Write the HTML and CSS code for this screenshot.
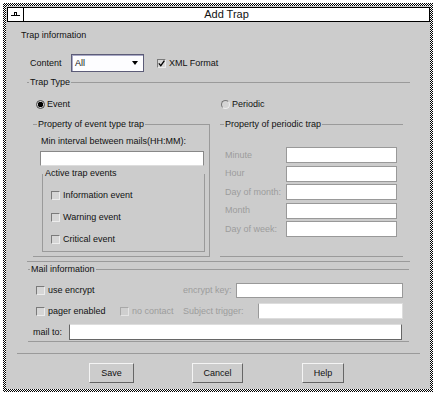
FILE: index.html
```html
<!DOCTYPE html>
<html>
<head>
    <meta charset="utf-8" />
    <title>Add Trap</title>
    <link rel="stylesheet" href="styles.css">
</head>
<body>
    <div class="frame">
        <div class="window">
            <div class="titlebar">
                <div class="menu-icon">
                    <svg width="9" height="5" viewBox="0 0 9 5"><path d="M3 0.5h3M3.5 0.5v3M5.5 0.5v3M0 3.5h9" stroke="#000" stroke-width="1" fill="none"/></svg>
                </div>
                <div class="title">Add Trap</div>
            </div>

            <div class="section-title">Trap information</div>

            <div class="content-row">
                <span class="content-label">Content</span>
                <div class="combo"><span>All</span><span class="arrow"></span></div>
                <span class="check checked">
                    <svg width="7" height="7" viewBox="0 0 7 7"><path d="M0.8 3.4l2 2.2l3.6-5" stroke="#000" stroke-width="1.3" fill="none"/></svg>
                </span>
                <span class="check-text">XML Format</span>
            </div>

            <fieldset class="group trap-type">
                <legend>Trap Type</legend>
                <div class="trap-grid">
                    <div class="radio-row"><span class="radio on"></span><span class="radio-text">Event</span></div>
                    <div class="radio-row periodic"><span class="radio"></span><span class="radio-text">Periodic</span></div>

                    <fieldset class="group event-box">
                        <legend>Property of event type trap</legend>
                        <div class="field-label">Min interval between mails(HH:MM):</div>
                        <div class="input interval"></div>
                        <fieldset class="group active-box">
                            <legend>Active trap events</legend>
                            <div class="event-list">
                                <div class="event-row"><span class="check"></span><span class="check-text">Information event</span></div>
                                <div class="event-row"><span class="check"></span><span class="check-text">Warning event</span></div>
                                <div class="event-row"><span class="check"></span><span class="check-text">Critical event</span></div>
                            </div>
                        </fieldset>
                    </fieldset>

                    <fieldset class="group periodic-box">
                        <legend>Property of periodic trap</legend>
                        <div class="periodic-list">
                            <div class="periodic-row"><span class="dim">Minute</span><div class="input"></div></div>
                            <div class="periodic-row"><span class="dim">Hour</span><div class="input"></div></div>
                            <div class="periodic-row"><span class="dim">Day of month:</span><div class="input"></div></div>
                            <div class="periodic-row"><span class="dim">Month</span><div class="input"></div></div>
                            <div class="periodic-row"><span class="dim">Day of week:</span><div class="input"></div></div>
                        </div>
                    </fieldset>
                </div>
            </fieldset>

            <fieldset class="group mail-box">
                <legend>Mail information</legend>
                <div class="mail-row">
                    <span class="opt encrypt"><span class="check"></span><span class="check-text">use encrypt</span></span>
                    <span class="dim key-label">encrypt key:</span>
                    <div class="input key-input"></div>
                </div>
                <div class="mail-row">
                    <span class="opt pager"><span class="check"></span><span class="check-text">pager enabled</span></span>
                    <span class="opt contact"><span class="check off"></span><span class="check-text dim">no contact</span></span>
                    <span class="dim subject-label">Subject trigger:</span>
                    <div class="input subject-input"></div>
                </div>
                <div class="mail-row mail-to">
                    <span class="mail-label">mail to:</span>
                    <div class="input mail-input"></div>
                </div>
            </fieldset>

            <div class="separator"></div>

            <div class="buttons">
                <button class="btn save">Save</button>
                <button class="btn cancel">Cancel</button>
                <button class="btn help">Help</button>
            </div>
        </div>
    </div>
</body>
</html>
```

FILE: styles.css
```css
body {
    margin: 0;
    background: white;
    font-family: "Liberation Sans", Arial, sans-serif;
    font-size: 9px;
    line-height: 11px;
    color: #111;
}

.frame {
    margin: 3px 0 0 3px;
    width: 430px;
    height: 389px;
    padding: 3px;
    box-sizing: border-box;
    background: repeating-conic-gradient(#000 0% 25%, #fff 0% 50%) 0 0 / 2px 2px;
}

.window {
    width: 424px;
    height: 383px;
    background: #cccccc;
    display: flex;
    flex-direction: column;
    align-items: flex-start;
}

.titlebar {
    margin: 1px 0 0 1px;
    width: 423px;
    height: 15px;
    box-sizing: border-box;
    border: 1px solid #000;
    background: white;
    display: flex;
}

.menu-icon {
    width: 15px;
    border-right: 1px solid #000;
    display: flex;
    align-items: center;
    justify-content: center;
}

.title {
    flex: 1;
    text-align: center;
    font-size: 11px;
    line-height: 13px;
}

.section-title {
    margin: 8px 0 0 15px;
}

/* content row */
.content-row {
    margin: 13px 0 0 24px;
    height: 18px;
    display: flex;
    align-items: center;
}

.content-label {
    width: 41px;
}

.combo {
    width: 73px;
    height: 18px;
    box-sizing: border-box;
    border: 1px solid #5c5c78;
    box-shadow: inset 1px 1px 0 #a9a9c6;
    background: #fdfdff;
    display: flex;
    align-items: center;
    justify-content: space-between;
    padding: 0 5px 0 3px;
    margin-right: 13px;
}

.arrow {
    width: 0;
    height: 0;
    border-left: 3px solid transparent;
    border-right: 3px solid transparent;
    border-top: 4px solid #000;
}

.check {
    width: 9px;
    height: 9px;
    box-sizing: border-box;
    border: 1px solid;
    border-color: #7a7a7a #ececec #ececec #7a7a7a;
    background: #d6d6d6;
    display: inline-flex;
    align-items: center;
    justify-content: center;
    flex: none;
}

.check.off {
    border-color: #a8a8a8 #e4e4e4 #e4e4e4 #a8a8a8;
    background: #cfcfcf;
}

.check-text {
    margin-left: 3px;
}

.dim {
    color: #9c9c9c;
}

/* titled groups */
.group {
    margin: 0;
    padding: 0;
    min-width: 0;
    border: 0;
    border-top: 1px solid #9a9a9a;
    border-bottom: 1px solid #9a9a9a;
}

.group > legend {
    padding: 0 1px;
    margin-left: 2px;
    line-height: 11px;
}

.trap-type {
    margin: 5px 0 0 21px;
    width: 383px;
}

.trap-grid {
    display: grid;
    grid-template-columns: 177px 183px;
    column-gap: 10px;
    padding: 0 0 4px 6px;
}

.radio-row {
    margin-top: 11px;
    height: 11px;
    display: flex;
    align-items: center;
    padding-left: 3px;
}

.radio-row.periodic {
    padding-left: 1px;
}

.radio {
    width: 9px;
    height: 9px;
    box-sizing: border-box;
    border-radius: 50%;
    border: 1px solid;
    border-color: #777 #eee #eee #777;
    background: #d4d4d4;
    flex: none;
}

.radio.on {
    border-color: #444;
    background: radial-gradient(circle, #000 0 2.5px, #cfcfcf 3px);
}

.radio-text {
    margin-left: 2px;
}

.event-box {
    margin-top: 9px;
    border-right: 1px solid #9a9a9a;
    height: 138px;
    box-sizing: border-box;
    padding: 0 0 0 7px;
}

.event-box > legend {
    margin-left: -3px;
}

.periodic-box > legend {
    margin-left: 4px;
}

.field-label {
    margin: 6px 0 0 1px;
}

.input {
    background: white;
    box-sizing: border-box;
    border: 1px solid #999;
}

.interval {
    margin-top: 4px;
    width: 164px;
    height: 15px;
    border-color: #888 #888 #ddd #888;
}

.active-box {
    margin: 2px 0 0 2px;
    width: 163px;
    height: 84px;
    box-sizing: border-box;
    border-top: 0;
    border-left: 1px solid #9a9a9a;
    border-right: 1px solid #9a9a9a;
}

.active-box > legend {
    padding: 0;
    margin-left: 2px;
}

.event-list {
    display: flex;
    flex-direction: column;
    gap: 11px;
    padding: 11px 0 0 8px;
}

.event-row {
    height: 11px;
    display: flex;
    align-items: center;
}

.periodic-box {
    margin-top: 9px;
    width: 183px;
    height: 138px;
    box-sizing: border-box;
}

.periodic-list {
    display: flex;
    flex-direction: column;
    gap: 2.5px;
    padding: 17px 0 0 5px;
}

.periodic-row {
    display: flex;
    align-items: center;
    height: 16px;
}

.periodic-row .dim {
    width: 61px;
}

.periodic-row .input {
    width: 111px;
    height: 16px;
}

/* mail */
.mail-box {
    margin: 2px 0 0 22px;
    width: 381px;
    height: 78px;
    box-sizing: border-box;
}

.mail-row {
    display: flex;
    align-items: center;
    padding-left: 8px;
    margin-top: 5px;
}

.mail-row:first-of-type {
    margin-top: 8px;
}

.opt {
    display: flex;
    align-items: center;
}

.encrypt {
    width: 147px;
}

.key-label {
    width: 53px;
}

.key-input {
    width: 167px;
    height: 15px;
}

.pager {
    width: 84px;
}

.contact {
    width: 63px;
}

.subject-label {
    width: 75px;
}

.subject-input {
    width: 145px;
    height: 16px;
    border-color: #ddd #ddd #ddd #999;
}

.mail-to {
    padding-left: 5px;
}

.mail-label {
    width: 36px;
}

.mail-input {
    width: 333px;
    height: 16px;
    border-color: #ddd #666 #666 #666;
}

.separator {
    margin: 11px 0 0 11px;
    width: 403px;
    border-top: 1px solid #9a9a9a;
}

.buttons {
    margin: 9px 0 0 83px;
    display: flex;
    gap: 58px;
}

.btn {
    height: 20px;
    padding: 0;
    font-family: inherit;
    font-size: 9px;
    color: #111;
    background: #cccccc;
    border: 1px solid;
    border-color: #f4f4f4 #666 #666 #f4f4f4;
}

.save {
    width: 45px;
}

.cancel {
    width: 51px;
}

.help {
    width: 42px;
    margin-left: 1px;
}
```
